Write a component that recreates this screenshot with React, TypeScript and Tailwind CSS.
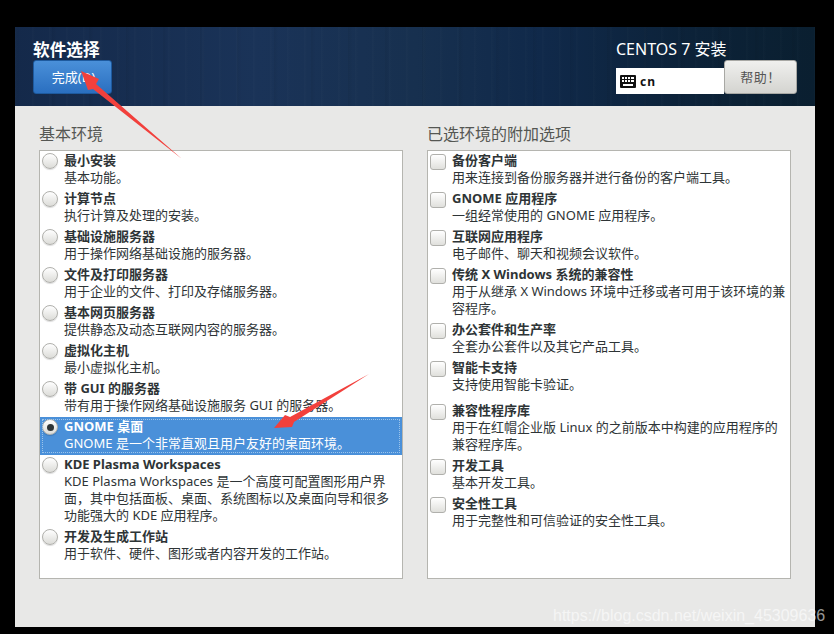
const envs = [
  { title: "最小安装", desc: "基本功能。" },
  { title: "计算节点", desc: "执行计算及处理的安装。" },
  { title: "基础设施服务器", desc: "用于操作网络基础设施的服务器。" },
  { title: "文件及打印服务器", desc: "用于企业的文件、打印及存储服务器。" },
  { title: "基本网页服务器", desc: "提供静态及动态互联网内容的服务器。" },
  { title: "虚拟化主机", desc: "最小虚拟化主机。" },
  { title: "带 GUI 的服务器", desc: "带有用于操作网络基础设施服务 GUI 的服务器。" },
  { title: "GNOME 桌面", desc: "GNOME 是一个非常直观且用户友好的桌面环境。", selected: true },
  {
    title: "KDE Plasma Workspaces",
    desc: "KDE Plasma Workspaces 是一个高度可配置图形用户界面，其中包括面板、桌面、系统图标以及桌面向导和很多功能强大的 KDE 应用程序。",
  },
  { title: "开发及生成工作站", desc: "用于软件、硬件、图形或者内容开发的工作站。" },
];

const addons = [
  { title: "备份客户端", desc: "用来连接到备份服务器并进行备份的客户端工具。" },
  { title: "GNOME 应用程序", desc: "一组经常使用的 GNOME 应用程序。" },
  { title: "互联网应用程序", desc: "电子邮件、聊天和视频会议软件。" },
  { title: "传统 X Windows 系统的兼容性", desc: "用于从继承 X Windows 环境中迁移或者可用于该环境的兼容程序。" },
  { title: "办公套件和生产率", desc: "全套办公套件以及其它产品工具。" },
  { title: "智能卡支持", desc: "支持使用智能卡验证。" },
  { title: "兼容性程序库", desc: "用于在红帽企业版 Linux 的之前版本中构建的应用程序的兼容程序库。", spaced: true },
  { title: "开发工具", desc: "基本开发工具。" },
  { title: "安全性工具", desc: "用于完整性和可信验证的安全性工具。" },
];

function Radio({ checked }: { checked?: boolean }) {
  return (
    <span className="flex h-4 w-4 shrink-0 items-center justify-center rounded-full border border-[#b0b0ac] bg-gradient-to-b from-[#ffffff] to-[#dcdcd8] shadow-[0_1px_1px_rgba(0,0,0,0.15)]">
      {checked && <span className="h-[7px] w-[7px] rounded-full bg-[#2e3436]" />}
    </span>
  );
}

function Checkbox() {
  return (
    <span className="mt-[1px] h-4 w-4 shrink-0 rounded-[3px] border border-[#b0b0ac] bg-gradient-to-b from-[#ffffff] to-[#e0e0dc]" />
  );
}

function KeyboardIcon() {
  return (
    <svg width="16" height="13" viewBox="0 0 16 13">
      <rect width="16" height="13" rx="1" fill="#111" />
      <g fill="#fff">
        <rect x="2" y="2" width="2" height="2" />
        <rect x="5" y="2" width="2" height="2" />
        <rect x="8" y="2" width="2" height="2" />
        <rect x="11" y="2" width="3" height="2" />
        <rect x="2" y="5" width="2" height="2" />
        <rect x="5" y="5" width="2" height="2" />
        <rect x="8" y="5" width="2" height="2" />
        <rect x="11" y="5" width="3" height="2" />
        <rect x="3" y="9" width="10" height="2" />
      </g>
    </svg>
  );
}

export default function App() {
  return (
    <div className="relative h-[634px] w-[834px] overflow-hidden bg-black pl-[15px] pt-[27px] font-['Noto_Sans','Noto_Sans_CJK_SC',sans-serif] text-[13px] leading-[17px] text-[#2e3436]">
      <div className="flex h-[600px] w-[800px] flex-col bg-[#e8e8e7]">
        <header className="flex h-[79px] shrink-0 justify-between pl-[18px] pr-[18px] pt-[12px] [background:repeating-linear-gradient(90deg,rgba(255,255,255,0.015)_0px,transparent_3px,transparent_17px),repeating-linear-gradient(90deg,rgba(0,0,0,0.05)_0px,transparent_5px,transparent_37px),linear-gradient(90deg,#14294a_0%,#1a3358_30%,#17304f_50%,#10294a_66%,#0c2238_85%,#0a1f30_100%)]">
          <div className="flex flex-col">
            <h1 className="h-[21px] text-[16.7px] font-bold leading-[21px] text-white">软件选择</h1>
            <button className="h-[34px] w-[79px] rounded-[3px] border border-[#1e5a9e] bg-gradient-to-b from-[#4a90d9] to-[#2a6fc0] pl-[2px] text-[13px] text-white">
              完成(D)
            </button>
          </div>
          <div className="flex w-[181px] flex-col">
            <div className="h-[21px] text-[16px] leading-[21px] text-white">CENTOS 7 安装</div>
            <div className="flex items-end">
              <div className="flex h-[26px] w-[108px] items-center gap-1 bg-white pl-1 text-[12px] font-bold tracking-[1px] text-[#111]">
                <KeyboardIcon />
                cn
              </div>
              <button className="h-[34px] w-[73px] rounded-[3px] border border-[#a8a8a4] bg-gradient-to-b from-[#f0f0ee] to-[#d4d4d0] text-[13px] tracking-[0.5px] text-[#555]">
                帮助！
              </button>
            </div>
          </div>
        </header>

        <main className="flex flex-1 gap-6 px-6 pt-[17px]">
          <section className="w-[364px]">
            <h2 className="h-[27px] pt-[1px] text-[16px] font-normal leading-[21px] text-[#555753]">基本环境</h2>
            <div className="h-[429px] border border-[#b5b5b0] bg-white">
              {envs.map((env) => (
                <div
                  key={env.title}
                  className={`flex gap-[6px] py-[2px] pl-[2px] pr-[6px] ${env.selected ? "bg-[#4a90d9] text-white outline-1 outline-dotted outline-[#9cc4ea] [outline-offset:-3px]" : ""}`}
                >
                  <Radio checked={env.selected} />
                  <div className="-mt-[1px] mb-[1px]">
                    <div className="font-bold">{env.title}</div>
                    <div>{env.desc}</div>
                  </div>
                </div>
              ))}
            </div>
          </section>

          <section className="w-[364px]">
            <h2 className="h-[27px] pt-[1px] text-[16px] font-normal leading-[21px] text-[#555753]">已选环境的附加选项</h2>
            <div className="h-[429px] border border-[#b5b5b0] bg-white">
              {addons.map((addon) => (
                <div key={addon.title} className={`flex gap-[6px] py-[2px] pl-[2px] pr-[3px] ${addon.spaced ? "mt-[5px]" : ""}`}>
                  <Checkbox />
                  <div className="-mt-[1px] mb-[1px]">
                    <div className="font-bold">{addon.title}</div>
                    <div>{addon.desc}</div>
                  </div>
                </div>
              ))}
            </div>
          </section>
        </main>
      </div>

      {/* annotations drawn on top of the screenshot */}
      <svg className="absolute left-0 top-0" width="834" height="634" viewBox="0 0 834 634">
        <polygon points="81,71 99,79 96,84 182,159 93,89 88,90" fill="#f2403c" />
        <polygon points="274,428 285,415 290,417 369,374 294,422 292,427" fill="#f2403c" />
      </svg>
      <div className="absolute left-[553px] top-[606px] font-['Liberation_Sans',sans-serif] text-[16px] leading-[20px] text-white/60">
        https://blog.csdn.net/weixin_45309636
      </div>
    </div>
  );
}
